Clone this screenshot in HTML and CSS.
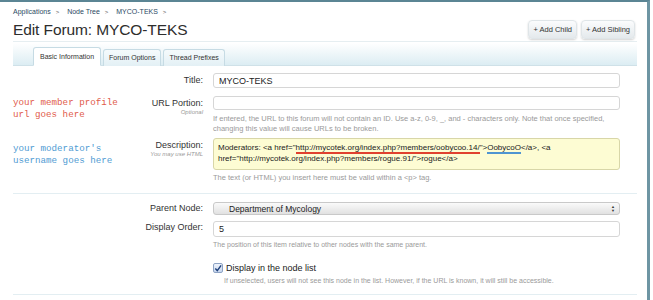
FILE: index.html
```html
<!DOCTYPE html>
<html lang="en">
<head>
    <meta charset="UTF-8">
    <title>Edit Forum: MYCO-TEKS</title>
    <link rel="stylesheet" href="styles.css">
</head>
<body>
    <div class="frame">
        <div class="breadcrumb">
            <a href="#">Applications</a> <span class="sep">&gt;</span>
            <a href="#">Node Tree</a> <span class="sep">&gt;</span>
            <a href="#">MYCO-TEKS</a> <span class="sep">&gt;</span>
        </div>
        <div class="title-bar">
            <h1>Edit Forum: MYCO-TEKS</h1>
            <div class="actions">
                <a href="#" class="button">+ Add Child</a>
                <a href="#" class="button">+ Add Sibling</a>
            </div>
        </div>

        <div class="tabs">
            <a href="#" class="tab active">Basic Information</a>
            <a href="#" class="tab">Forum Options</a>
            <a href="#" class="tab">Thread Prefixes</a>
        </div>

        <form class="form">
            <div class="row row-title">
                <div class="label-cell"><label>Title:</label></div>
                <div class="field">
                    <input type="text" class="text" value="MYCO-TEKS">
                </div>
            </div>

            <div class="row row-url">
                <div class="label-cell">
                    <span class="note note-red">your member profile<br>url goes here</span>
                    <div class="label-box">
                        <label>URL Portion:</label>
                        <span class="sub">Optional</span>
                    </div>
                </div>
                <div class="field">
                    <input type="text" class="text">
                    <p class="hint">If entered, the URL to this forum will not contain an ID. Use a-z, 0-9, _, and - characters only. Note that once specified,<br>changing this value will cause URLs to be broken.</p>
                </div>
            </div>

            <div class="row row-desc">
                <div class="label-cell">
                    <span class="note note-blue">your moderator's<br>username goes here</span>
                    <div class="label-box">
                        <label>Description:</label>
                        <span class="sub">You may use HTML</span>
                    </div>
                </div>
                <div class="field">
                    <div class="textarea">Moderators: &lt;a href="<span class="mark-red">http://mycotek.org/index.php?members/oobycoo.14/</span>"&gt;<span class="mark-blue">OobycoO</span>&lt;/a&gt;, &lt;a<br>href="http://mycotek.org/index.php?members/rogue.91/"&gt;rogue&lt;/a&gt;</div>
                    <p class="hint">The text (or HTML) you insert here must be valid within a &lt;p&gt; tag.</p>
                </div>
            </div>

            <div class="divider"></div>

            <div class="row row-parent">
                <div class="label-cell"><label>Parent Node:</label></div>
                <div class="field">
                    <div class="select">
                        <span>Department of Mycology</span>
                        <span class="arrows">&#9650;<br>&#9660;</span>
                    </div>
                </div>
            </div>

            <div class="row row-order">
                <div class="label-cell"><label>Display Order:</label></div>
                <div class="field">
                    <input type="text" class="text" value="5">
                    <p class="hint">The position of this item relative to other nodes with the same parent.</p>
                </div>
            </div>

            <div class="row row-check">
                <div class="label-cell"></div>
                <div class="field">
                    <label class="check">
                        <span class="box">
                            <svg width="9" height="9" viewBox="0 0 9 9"><path d="M1.5 4.5 L3.7 7 L8 1" fill="none" stroke="#1d3f7a" stroke-width="1.6"/></svg>
                        </span>
                        Display in the node list
                    </label>
                    <p class="hint hint-check">If unselected, users will not see this node in the list. However, if the URL is known, it will still be accessible.</p>
                </div>
            </div>

            <div class="divider divider-bottom"></div>
        </form>
    </div>
</body>
</html>
```

FILE: styles.css
```css
body {
    margin: 0;
    padding: 0;
    background: #ffffff;
    font-family: "Liberation Sans", Arial, sans-serif;
    color: #333;
}

.frame {
    width: 650px;
    height: 300px;
    box-sizing: border-box;
    border-top: 2px solid #5b8594;
    border-right: 3px solid #6e95a3;
    padding: 0 10px 0 13px;
    overflow: hidden;
}

.breadcrumb {
    font-size: 7px;
    padding-top: 6px;
    height: 10px;
    color: #2b4a63;
}

.breadcrumb a {
    color: #2b4a63;
    text-decoration: none;
    margin-right: 3px;
}

.breadcrumb .sep {
    font-size: 6px;
    color: #555;
    margin-right: 6px;
}

.title-bar {
    display: flex;
    justify-content: space-between;
    align-items: center;
    height: 23px;
    border-bottom: 1px solid #e6eef1;
}

h1 {
    margin: 0;
    font-size: 15.5px;
    font-weight: normal;
    color: #2d2d2d;
    letter-spacing: -0.1px;
}

.actions {
    display: flex;
    gap: 4px;
    margin-right: 2px;
}

.button {
    display: block;
    font-size: 7.5px;
    color: #333;
    text-decoration: none;
    padding: 4px 4px;
    border-radius: 4px;
    background: linear-gradient(#fbfcfd, #e4e9ec);
    border: 1px solid #dfe5e8;
    box-shadow: 0 1px 2px rgba(0, 0, 0, 0.18);
}

.tabs {
    display: flex;
    gap: 2px;
    height: 22px;
    margin-top: 1px;
    padding: 0 0 0 20px;
    align-items: flex-end;
    background: linear-gradient(#ffffff, #dcedf3);
    border-bottom: 1px solid #cfe1e8;
}

.tab {
    display: block;
    font-size: 7px;
    color: #333;
    text-decoration: none;
    padding: 4px 5px 5px;
    border: 1px solid #c6dbe4;
    border-bottom: none;
    border-radius: 3px 3px 0 0;
    background: linear-gradient(#f5fafc, #e3f0f5);
    margin-bottom: -1px;
}

.tab.active {
    background: #ffffff;
    padding: 5px 6px 5px;
    border-bottom: 1px solid #ffffff;
}

.form {
    padding-top: 7px;
}

.row {
    display: grid;
    grid-template-columns: 190px 407px;
    column-gap: 10px;
}

.label-cell {
    display: flex;
    justify-content: space-between;
    align-items: flex-start;
}

.label-cell > label,
.label-box label {
    font-size: 9px;
    color: #333;
    line-height: 15px;
}

.label-cell > label {
    margin-left: auto;
}

.label-box {
    display: flex;
    flex-direction: column;
    align-items: flex-end;
}

.sub {
    font-size: 6px;
    font-style: italic;
    color: #999;
    margin-top: -2px;
}

.note {
    font-family: "Liberation Mono", "DejaVu Sans Mono", monospace;
    font-size: 9.2px;
    line-height: 12px;
}

.note-red {
    color: #df5b4b;
    margin-top: 1px;
}

.note-blue {
    color: #4f9bd3;
    margin-top: 5px;
}

.text {
    display: block;
    box-sizing: border-box;
    width: 407px;
    height: 15px;
    margin: 0;
    padding: 0 5px;
    font-family: "Liberation Sans", Arial, sans-serif;
    font-size: 9px;
    color: #222;
    border: 1px solid #d6d6d6;
    border-radius: 3px;
    background: #fff;
    outline: none;
}

.row-title {
    height: 23px;
}

.row-url {
    height: 42px;
}

.row-url .text {
    height: 14px;
}

.hint {
    margin: 4px 0 0;
    font-size: 7.5px;
    line-height: 10px;
    color: #9a9a9a;
}

.textarea {
    box-sizing: border-box;
    height: 32px;
    padding: 3px 4px;
    font-size: 8px;
    line-height: 11px;
    color: #222;
    background: #fdfcd3;
    border: 1px solid #d8d6a8;
    border-radius: 3px;
    white-space: nowrap;
}

.mark-red {
    border-bottom: 2px solid #e0412f;
}

.mark-blue {
    border-bottom: 2px solid #4f95d1;
}

.row-desc {
    height: 55px;
}

.row-desc .hint {
    margin-top: 3px;
}

.divider {
    height: 1px;
    background: #e3eef2;
    margin-bottom: 8px;
}

.row-parent {
    height: 19px;
}

.row-parent .label-cell > label,
.row-order .label-cell > label {
    font-size: 9px;
    line-height: 13px;
}

.select {
    display: flex;
    justify-content: space-between;
    align-items: center;
    box-sizing: border-box;
    height: 13px;
    padding: 0 4px 0 15px;
    font-size: 8.5px;
    color: #222;
    background: linear-gradient(#fafafa, #e1e1e1);
    border: 1px solid #c9c9c9;
    border-radius: 3px;
}

.arrows {
    font-size: 4px;
    line-height: 4px;
    color: #333;
    text-align: center;
}

.row-order {
    height: 41px;
}

.row-order .text {
    height: 16px;
    font-size: 9px;
}

.row-order .hint {
    margin-top: 3px;
    font-size: 7px;
}

.check {
    display: flex;
    align-items: center;
    gap: 3px;
    font-size: 9px;
    color: #222;
    height: 12px;
}

.box {
    display: flex;
    align-items: center;
    justify-content: center;
    width: 8px;
    height: 8px;
    border: 1px solid #8ea3c4;
    border-radius: 2px;
    background: linear-gradient(#eef3fb, #c7d6ee);
}

.hint-check {
    margin: 2px 0 0 11px;
    font-size: 7px;
}

.row-check {
    height: 32px;
}

.divider-bottom {
    margin: 0;
}
```
